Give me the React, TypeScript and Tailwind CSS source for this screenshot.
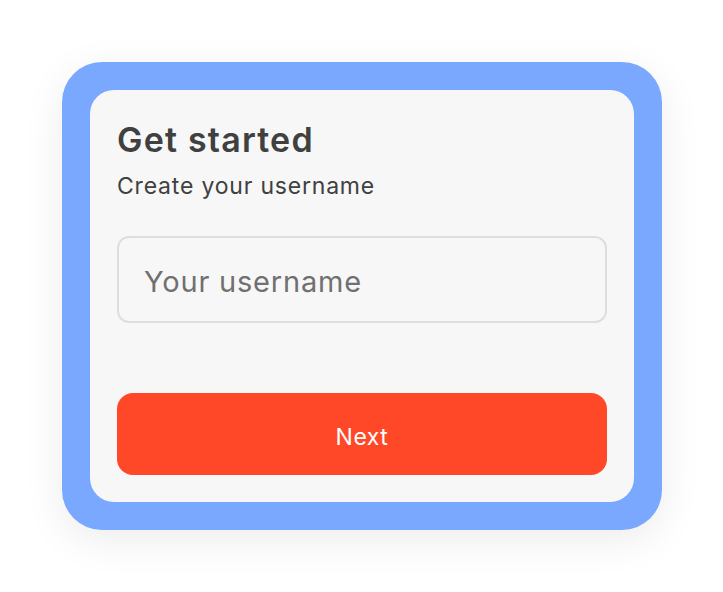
export default function App() {
  return (
    <div className="min-h-[592px] w-[723px] bg-white pt-[62px] pl-[62px]" style={{ fontFamily: "Inter, 'Open Sans', sans-serif" }}>
      <div className="w-[600px] rounded-[40px] bg-[#7aa8ff] p-[28px] shadow-[0_10px_40px_rgba(0,0,0,0.08)]">
        <div className="flex h-[412px] flex-col rounded-[24px] bg-[#f7f7f7] px-[27px] pt-[28px] pb-[27px]">
          <h1 className="text-[34px] leading-[44px] font-semibold tracking-[1.2px] text-[#404040]">Get started</h1>
          <p className="mt-[9px] text-[23px] leading-[30px] tracking-[0.8px] text-[#404040]">Create your username</p>
          <input
            placeholder="Your username"
            className="mt-[35px] h-[87px] w-full rounded-[12px] border-2 border-[#dedede] bg-[#f7f7f7] px-[25px] pt-[3px] text-[29px] tracking-[0.8px] text-[#404040] outline-none placeholder:text-[#707070]"
          />
          <button className="mt-auto h-[82px] w-full rounded-[16px] bg-[#ff4828] pt-[7px] text-[23px] tracking-[0.5px] text-white">Next</button>
        </div>
      </div>
    </div>
  );
}
